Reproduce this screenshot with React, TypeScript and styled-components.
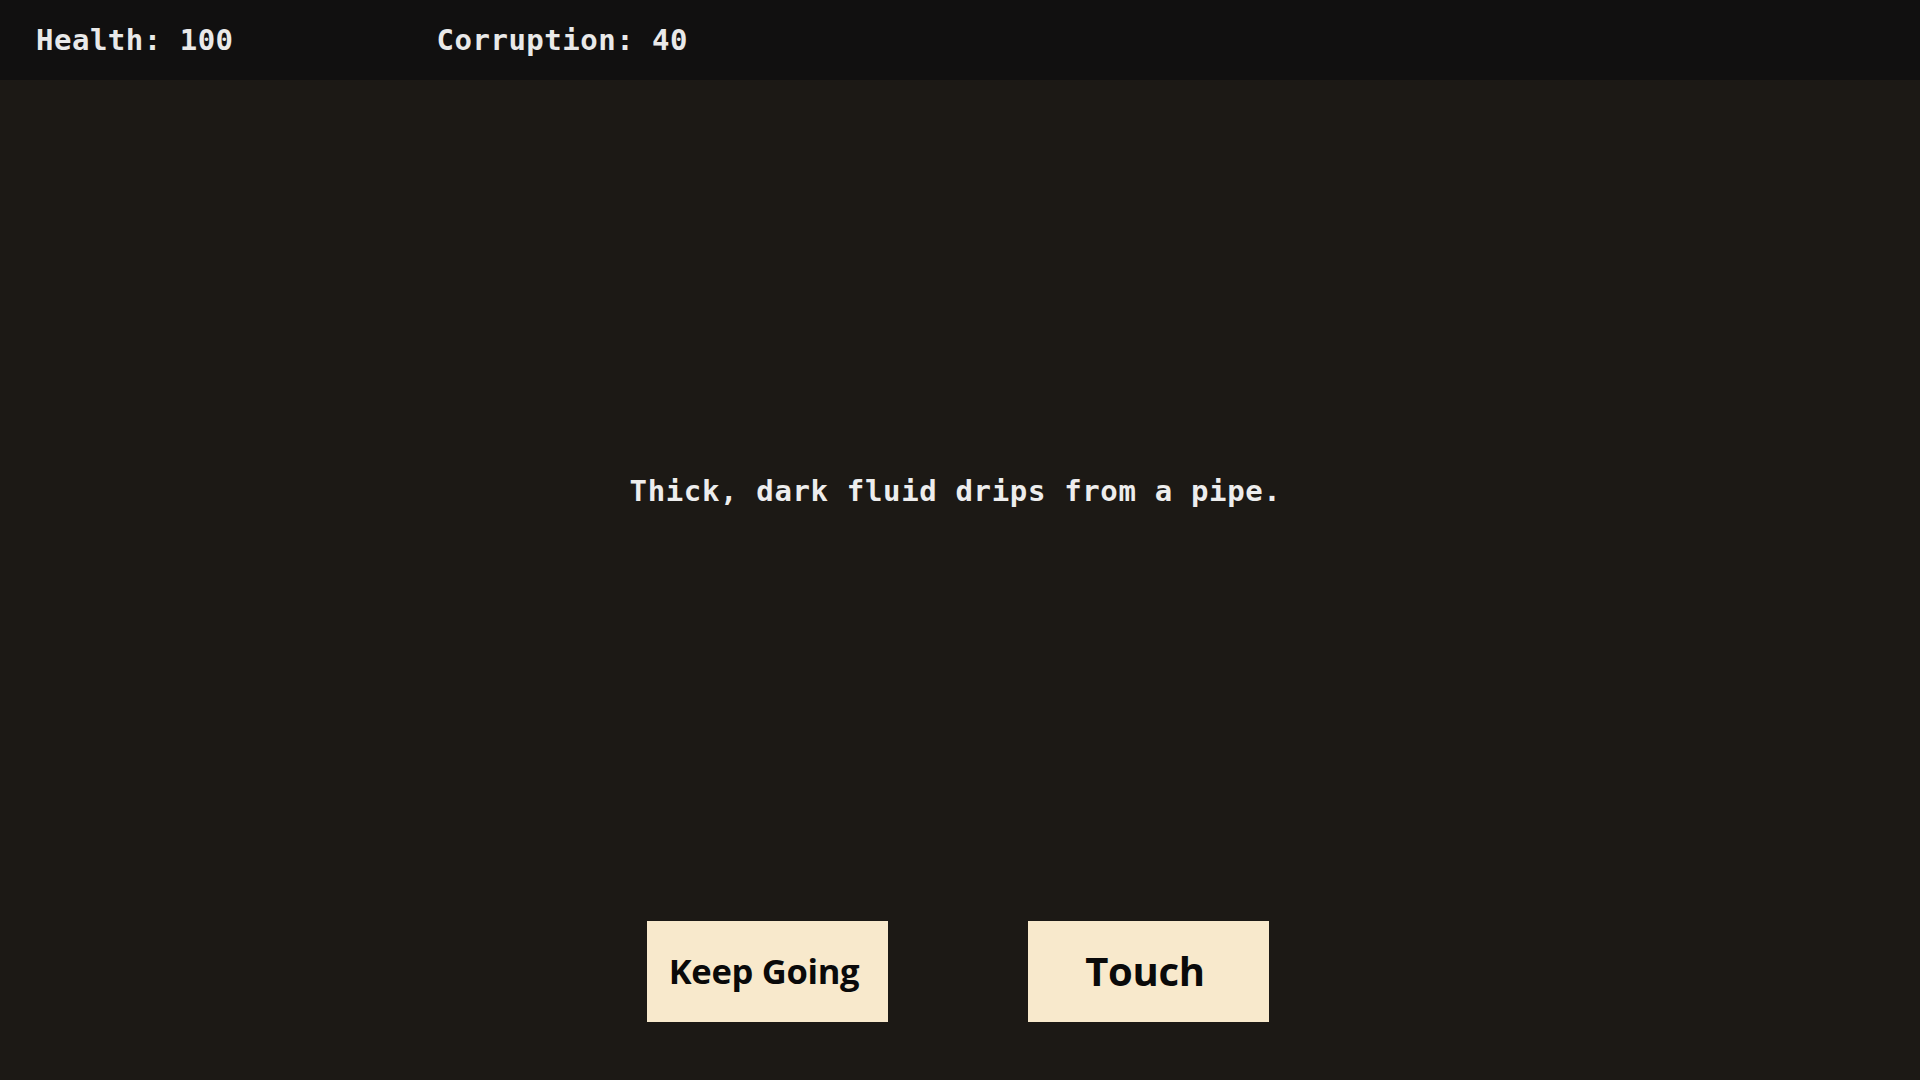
import React from "react";
import styled, { createGlobalStyle } from "styled-components";

const Global = createGlobalStyle`
  html, body, #root { margin: 0; padding: 0; height: 100%; }
  body { background: #1c1915; }
  * { box-sizing: border-box; }
`;

const Screen = styled.div`
  width: 1920px;
  height: 1080px;
  display: flex;
  flex-direction: column;
  background: #1c1915;
  overflow: hidden;
`;

const TopBar = styled.header`
  height: 80px;
  flex: 0 0 80px;
  background: #111010;
  display: flex;
  align-items: center;
  padding: 0 36px;
  gap: 203px;
`;

const Stat = styled.span`
  font-family: "DejaVu Sans Mono", "Liberation Mono", monospace;
  font-weight: bold;
  font-size: 29px;
  letter-spacing: 0.5px;
  color: #e9e9e9;
  white-space: pre;
`;

const Main = styled.main`
  flex: 1;
  display: flex;
  flex-direction: column;
  padding-bottom: 58px;
  gap: 19px;
`;

const Story = styled.div`
  flex: 1;
  display: flex;
  align-items: center;
  justify-content: center;
  padding-right: 9px;
`;

const StoryText = styled.p`
  margin: 0;
  font-family: "DejaVu Sans Mono", "Liberation Mono", monospace;
  font-weight: bold;
  font-size: 29px;
  letter-spacing: 0.65px;
  color: #ededed;
  white-space: pre;
`;

const Choices = styled.div`
  display: flex;
  justify-content: center;
  gap: 140px;
  padding-right: 4px;
`;

const Choice = styled.button<{ $size: number }>`
  width: 241px;
  height: 101px;
  border: none;
  border-radius: 0;
  background: #f8e9cc;
  color: #0a0a0a;
  font-family: "Open Sans", "Noto Sans", sans-serif;
  font-weight: 700;
  font-size: ${(p) => p.$size}px;
  letter-spacing: -0.3px;
  display: flex;
  align-items: center;
  justify-content: center;
  padding: 0 7px 3px 0;
  cursor: pointer;
`;

export default function App() {
  return (
    <>
      <Global />
      <Screen>
        <TopBar>
          <Stat>Health: 100</Stat>
          <Stat>Corruption: 40</Stat>
        </TopBar>
        <Main>
          <Story>
            <StoryText>Thick, dark fluid drips from a pipe.</StoryText>
          </Story>
          <Choices>
            <Choice $size={34.5}>Keep Going</Choice>
            <Choice $size={40}>Touch</Choice>
          </Choices>
        </Main>
      </Screen>
    </>
  );
}
